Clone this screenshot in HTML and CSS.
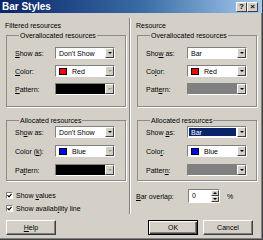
FILE: index.html
```html
<!DOCTYPE html>
<html>
<head>
<meta charset="utf-8">
<link rel="stylesheet" href="styles.css">
</head>
<body>
<div class="window">
  <header class="titlebar">
    <span class="title">Bar Styles</span>
    <span class="tbtns"><span class="tbtn">?</span><span class="tbtn">×</span></span>
  </header>
  <main class="content">
    <div class="cols">
      <section class="col">
        <div class="heading">Filtered resources</div>
        <fieldset class="group g1">
          <legend>Overallocated resources</legend>
          <div class="row"><span class="lbl"><u>S</u>how as:</span><div class="combo"><span class="val">Don't Show</span><span class="arrow"></span></div></div>
          <div class="row"><span class="lbl"><u>C</u>olor:</span><div class="combo"><span class="val"><i class="swatch red"></i>Red</span><span class="arrow off"></span></div></div>
          <div class="row"><span class="lbl"><u>P</u>attern:</span><div class="combo"><span class="val fill-black"></span><span class="arrow off"></span></div></div>
        </fieldset>
        <fieldset class="group g2">
          <legend>Allocated resources</legend>
          <div class="row"><span class="lbl">Sh<u>o</u>w as:</span><div class="combo"><span class="val">Don't Show</span><span class="arrow"></span></div></div>
          <div class="row"><span class="lbl">Color (<u>k</u>):</span><div class="combo"><span class="val"><i class="swatch blue"></i>Blue</span><span class="arrow off"></span></div></div>
          <div class="row"><span class="lbl">Pa<u>t</u>tern:</span><div class="combo"><span class="val fill-black"></span><span class="arrow off"></span></div></div>
        </fieldset>
        <div class="checks">
          <div class="check"><span class="box"><svg width="5" height="5" viewBox="0 0 5 5"><polyline points="0.5,2.2 2,3.8 4.6,0.8" fill="none" stroke="#000" stroke-width="1.2"/></svg></span><span class="ctext">Show <u>v</u>alues</span></div>
          <div class="check"><span class="box"><svg width="5" height="5" viewBox="0 0 5 5"><polyline points="0.5,2.2 2,3.8 4.6,0.8" fill="none" stroke="#000" stroke-width="1.2"/></svg></span><span class="ctext">Show availab<u>i</u>lity line</span></div>
        </div>
      </section>
      <div class="sep"></div>
      <section class="col">
        <div class="heading">Resource</div>
        <fieldset class="group g1">
          <legend>Overallocated resources</legend>
          <div class="row"><span class="lbl r">Sho<u>w</u> as:</span><div class="combo"><span class="val">Bar</span><span class="arrow"></span></div></div>
          <div class="row"><span class="lbl r">Co<u>l</u>or:</span><div class="combo"><span class="val"><i class="swatch red"></i>Red</span><span class="arrow"></span></div></div>
          <div class="row"><span class="lbl r">Patt<u>e</u>rn:</span><div class="combo"><span class="val fill-gray"></span><span class="arrow"></span></div></div>
        </fieldset>
        <fieldset class="group g2">
          <legend>Allocated resources</legend>
          <div class="row"><span class="lbl r">Show <u>a</u>s:</span><div class="combo"><span class="val sel">Bar</span><span class="arrow"></span></div></div>
          <div class="row"><span class="lbl r">Colo<u>r</u>:</span><div class="combo"><span class="val"><i class="swatch blue"></i>Blue</span><span class="arrow"></span></div></div>
          <div class="row"><span class="lbl r">Patter<u>n</u>:</span><div class="combo"><span class="val fill-gray"></span><span class="arrow"></span></div></div>
        </fieldset>
        <div class="overlap">
          <span class="lbl r"><u>B</u>ar overlap:</span>
          <div class="spin"><span class="spinval">0</span><span class="spinbtns"><span class="sb up"></span><span class="sb down"></span></span></div>
          <span class="pct">%</span>
        </div>
      </section>
    </div>
    <div class="buttons">
      <button class="btn"><u>H</u>elp</button>
      <span class="spacer"></span>
      <button class="btn default">OK</button>
      <button class="btn">Cancel</button>
    </div>
  </main>
</div>
</body>
</html>
```
FILE: styles.css
```css
* { box-sizing: border-box; }
html, body { margin: 0; padding: 0; }
body {
  width: 263px;
  height: 240px;
  overflow: hidden;
  font-family: "Liberation Sans", Arial, sans-serif;
  font-size: 7px;
  color: #000;
  background: #d4d0c8;
}
.window {
  width: 263px;
  height: 240px;
  background: #d4d0c8;
  border-right: 1px solid #404040;
  border-bottom: 1px solid #404040;
  box-shadow: inset -1px -1px 0 #808080;
  display: flex;
  flex-direction: column;
}
.titlebar {
  height: 13px;
  background: linear-gradient(to right, #0a246a 0%, #3a6ea5 55%, #a6caf0 100%);
  display: flex;
  align-items: center;
  justify-content: space-between;
  padding: 0 4px 0 2px;
}
.title {
  color: #fff;
  font-weight: bold;
  font-size: 10px;
  line-height: 13px;
}
.tbtns { display: flex; }
.tbtn {
  width: 11px;
  height: 10px;
  background: #d4d0c8;
  border: 1px solid;
  border-color: #fff #404040 #404040 #fff;
  font-size: 8px;
  font-weight: bold;
  line-height: 8px;
  text-align: center;
}
.content {
  flex: 1;
  display: flex;
  flex-direction: column;
}
.cols {
  display: flex;
  padding-left: 5px;
}
.col {
  width: 121px;
  display: flex;
  flex-direction: column;
}
.sep {
  width: 2px;
  margin: 5px 5px 0 3px;
  border-left: 1px solid #808080;
  border-right: 1px solid #fff;
}
.heading {
  margin-top: 8px;
  line-height: 9px;
  height: 9px;
}
.group {
  margin: 0 0 0 1px;
  width: 120px;
  border: 1px solid #8e8b86;
  box-shadow: 1px 1px 0 #fff;
  min-width: 0;
}
.group legend {
  line-height: 9px;
  padding: 0 1px;
  margin-left: 4px;
}
.g1 { margin-top: 1px; padding: 7px 0 11px 8px; }
.g2 { margin-top: 9px; padding: 1px 0 4px 8px; }
.row {
  display: flex;
  align-items: center;
  height: 12px;
}
.g1 .row + .row { margin-top: 6px; }
.g2 .row + .row { margin-top: 7px; }
.lbl { width: 40px; line-height: 9px; }
.lbl.r { width: 41px; }
.combo {
  width: 60px;
  height: 12px;
  background: #fff;
  border: 1px solid;
  border-color: #808080 #fff #fff #808080;
  display: flex;
}
.val {
  flex: 1;
  display: flex;
  align-items: center;
  padding-left: 3px;
  line-height: 9px;
}
.val.fill-black { background: #000; }
.val.fill-gray { background: #808080; }
.val.sel { background: #0a246a; color: #fff; margin: 1px; padding-left: 2px; }
.swatch {
  display: inline-block;
  width: 8px;
  height: 7px;
  border: 1px solid #000;
  margin-right: 5px;
}
.swatch.red { background: #ff0000; }
.swatch.blue { background: #0000ff; }
.arrow {
  width: 9px;
  background: #d4d0c8;
  border: 1px solid;
  border-color: #fff #404040 #404040 #fff;
  display: flex;
  align-items: center;
  justify-content: center;
}
.arrow::after {
  content: "";
  border-left: 2px solid transparent;
  border-right: 2px solid transparent;
  border-top: 2px solid #000;
}
.arrow.off::after { border-top-color: #a09d98; }
.checks {
  margin-top: 8px;
  padding-left: 1px;
}
.check {
  display: flex;
  align-items: center;
  height: 12px;
  line-height: 9px;
}
.check + .check { margin-top: 1px; }
.box {
  width: 7px;
  height: 7px;
  background: #fff;
  border: 1px solid;
  border-color: #808080 #fff #fff #808080;
  margin-right: 3px;
  display: flex;
  align-items: center;
  justify-content: center;
}
.overlap {
  margin-top: 8px;
  display: flex;
  align-items: center;
  height: 14px;
}
.overlap .lbl { width: 52px; }
.spin {
  width: 32px;
  height: 14px;
  background: #fff;
  border: 1px solid;
  border-color: #808080 #fff #fff #808080;
  display: flex;
}
.spinval { flex: 1; padding-left: 3px; line-height: 12px; }
.spinbtns { width: 8px; display: flex; flex-direction: column; }
.sb {
  flex: 1;
  background: #d4d0c8;
  border: 1px solid;
  border-color: #fff #404040 #404040 #fff;
  display: flex;
  align-items: center;
  justify-content: center;
}
.sb.up::after {
  content: "";
  border-left: 2px solid transparent;
  border-right: 2px solid transparent;
  border-bottom: 2px solid #000;
}
.sb.down::after {
  content: "";
  border-left: 2px solid transparent;
  border-right: 2px solid transparent;
  border-top: 2px solid #000;
}
.pct { margin-left: 7px; }
.buttons {
  display: flex;
  margin-top: 6px;
  padding: 0 9px 0 6px;
  gap: 5px;
}
.spacer { flex: 1; }
.btn {
  width: 50px;
  height: 15px;
  padding: 0;
  font-family: "Liberation Sans", Arial, sans-serif;
  font-size: 7px;
  color: #000;
  background: #d4d0c8;
  border: 1px solid;
  border-color: #fff #404040 #404040 #fff;
  box-shadow: inset -1px -1px 0 #808080;
}
.btn.default {
  border: 1px solid #000;
  box-shadow: inset 1px 1px 0 #fff, inset -1px -1px 0 #404040, inset -2px -2px 0 #808080;
}
```
